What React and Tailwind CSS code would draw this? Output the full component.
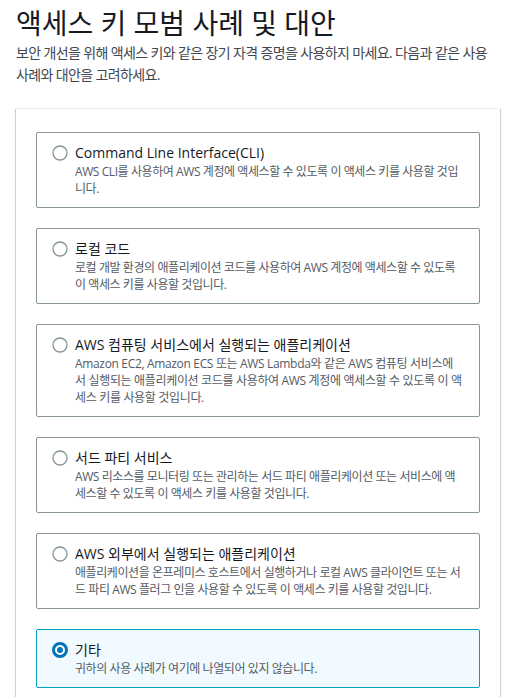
import React, { useState } from 'react';

const options = [
    {
        title: 'Command Line Interface(CLI)',
        desc: 'AWS CLI를 사용하여 AWS 계정에 액세스할 수 있도록 이 액세스 키를 사용할 것입니다.',
    },
    {
        title: '로컬 코드',
        desc: '로컬 개발 환경의 애플리케이션 코드를 사용하여 AWS 계정에 액세스할 수 있도록 이 액세스 키를 사용할 것입니다.',
    },
    {
        title: 'AWS 컴퓨팅 서비스에서 실행되는 애플리케이션',
        desc: 'Amazon EC2, Amazon ECS 또는 AWS Lambda와 같은 AWS 컴퓨팅 서비스에서 실행되는 애플리케이션 코드를 사용하여 AWS 계정에 액세스할 수 있도록 이 액세스 키를 사용할 것입니다.',
        // mostly latin on the first line, which runs narrower here
        tracking: 'tracking-[-0.028em]',
    },
    {
        title: '서드 파티 서비스',
        desc: 'AWS 리소스를 모니터링 또는 관리하는 서드 파티 애플리케이션 또는 서비스에 액세스할 수 있도록 이 액세스 키를 사용할 것입니다.',
    },
    {
        title: 'AWS 외부에서 실행되는 애플리케이션',
        desc: '애플리케이션을 온프레미스 호스트에서 실행하거나 로컬 AWS 클라이언트 또는 서드 파티 AWS 플러그 인을 사용할 수 있도록 이 액세스 키를 사용할 것입니다.',
    },
    {
        title: '기타',
        desc: '귀하의 사용 사례가 여기에 나열되어 있지 않습니다.',
    },
];

const Radio = ({ checked }) => (
    <svg width="16" height="16" viewBox="0 0 16 16" className="shrink-0">
        {checked ? (
            <>
                <circle cx="8" cy="8" r="6.5" fill="#ffffff" stroke="#0073bb" strokeWidth="3" />
                <circle cx="8" cy="8" r="3" fill="#0073bb" />
            </>
        ) : (
            <circle cx="8" cy="8" r="7" fill="#ffffff" stroke="#879596" strokeWidth="1.3" />
        )}
    </svg>
);

const App = () => {
    const [selected, setSelected] = useState(5);

    return (
        <div className="min-h-screen bg-white font-['Open_Sans','Noto_Sans_CJK_KR',sans-serif] text-[#16191f] px-4 pt-[5px] pb-6">
            <h1 className="text-[28px] leading-[36px] font-normal">액세스 키 모범 사례 및 대안</h1>
            <p className="mt-[1px] text-[14px] leading-[22px] tracking-[-0.045em] text-[#414750]">
                보안 개선을 위해 액세스 키와 같은 장기 자격 증명을 사용하지 마세요. 다음과 같은 사용 사례와 대안을 고려하세요.
            </p>

            <div className="mt-[22px] bg-white border-t border-[#eaeded] shadow-[0_1px_1px_0_rgba(0,28,36,0.3),1px_1px_1px_0_rgba(0,28,36,0.15),-1px_1px_1px_0_rgba(0,28,36,0.15)] pt-[23px] px-5 pb-5">
                <div className="flex flex-col gap-5">
                    {options.map((opt, index) => {
                        const checked = selected === index;
                        return (
                            <button
                                key={index}
                                type="button"
                                onClick={() => setSelected(index)}
                                className={`flex gap-[7px] items-start text-left rounded-[2px] border py-[10px] pl-[15px] pr-4 ${
                                    checked ? 'bg-[#f1faff] border-[#00a1c9]' : 'bg-white border-[#879596]'
                                }`}
                            >
                                <div className="h-5 flex items-center">
                                    <Radio checked={checked} />
                                </div>
                                <div className="flex-1">
                                    <div className="text-[14px] leading-5 text-[#16191f]">{opt.title}</div>
                                    <div className={`text-[12px] leading-[17px] text-[#545b64] ${opt.tracking || 'tracking-[-0.035em]'}`}>
                                        {opt.desc}
                                    </div>
                                </div>
                            </button>
                        );
                    })}
                </div>
            </div>
        </div>
    );
};

export default App;
